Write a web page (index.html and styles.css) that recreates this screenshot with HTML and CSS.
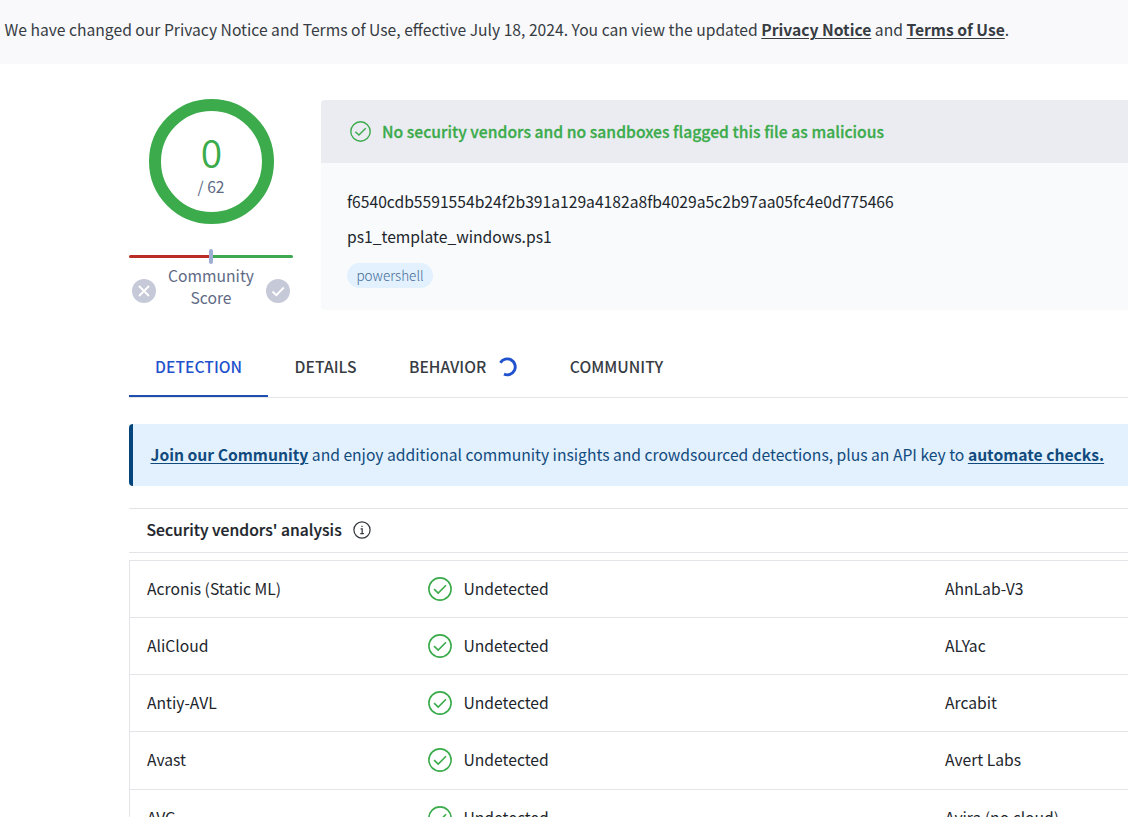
FILE: index.html
```html
<!DOCTYPE html>
<html lang="en">
<head>
<meta charset="utf-8">
<title>File report</title>
<link rel="stylesheet" href="styles.css">
</head>
<body>
<svg class="defs" width="0" height="0">
  <symbol id="check" viewBox="0 0 24 24"><circle cx="12" cy="12" r="11.1"/><path d="M6.1 12.2 10.2 16.1 18 8.3"/></symbol>
</svg>
<div class="notice"><p>We have changed our Privacy Notice and Terms of Use, effective July 18, 2024. You can view the updated <a>Privacy Notice</a> and <a>Terms of Use</a>.</p></div>
<main class="report">
  <section class="summary">
    <div class="score">
      <div class="ring"><div class="positives">0</div><div class="total">/ 62</div></div>
      <div class="gauge"><i class="bad"></i><i class="marker"></i><i class="good"></i></div>
      <div class="community">
        <svg class="vote" viewBox="0 0 24 24"><circle cx="12" cy="12" r="12"/><path d="M7 7 17 17M17 7 7 17"/></svg>
        <div class="label">Community<br>Score</div>
        <svg class="vote" viewBox="0 0 24 24"><circle cx="12" cy="12" r="12"/><path d="M6.5 12.5 10.3 16.2 17.8 8.5"/></svg>
      </div>
    </div>
    <div class="card">
      <div class="verdict"><svg class="check small"><use href="#check"/></svg><span>No security vendors and no sandboxes flagged this file as malicious</span></div>
      <div class="details">
        <div class="hash">f6540cdb5591554b24f2b391a129a4182a8fb4029a5c2b97aa05fc4e0d775466</div>
        <div class="filename">ps1_template_windows.ps1</div>
        <div class="tag">powershell</div>
      </div>
    </div>
  </section>
  <nav class="tabs">
    <div class="tab active"><span>DETECTION</span></div>
    <div class="tab"><span>DETAILS</span></div>
    <div class="tab"><span>BEHAVIOR</span><svg class="spinner" viewBox="0 0 20 20"><path d="M2.4 5.7A8 8 0 1 1 6 17.2"/></svg></div>
    <div class="tab"><span>COMMUNITY</span></div>
  </nav>
  <div class="join"><p><a>Join our Community</a> and enjoy additional community insights and crowdsourced detections, plus an API key to <a>automate checks.</a></p></div>
  <div class="heading"><span>Security vendors' analysis</span><svg class="info" viewBox="0 0 18 18"><circle cx="9" cy="9" r="8.1"/><path d="M7.6 7.8H9.2V12.6M7.3 12.6H10.9M9 4.7V6"/></svg></div>
  <div class="vendors">
    <div class="row"><span class="name">Acronis (Static ML)</span><span class="result"><svg class="check"><use href="#check"/></svg><span>Undetected</span></span><span class="name">AhnLab-V3</span></div>
    <div class="row"><span class="name">AliCloud</span><span class="result"><svg class="check"><use href="#check"/></svg><span>Undetected</span></span><span class="name">ALYac</span></div>
    <div class="row"><span class="name">Antiy-AVL</span><span class="result"><svg class="check"><use href="#check"/></svg><span>Undetected</span></span><span class="name">Arcabit</span></div>
    <div class="row"><span class="name">Avast</span><span class="result"><svg class="check"><use href="#check"/></svg><span>Undetected</span></span><span class="name">Avert Labs</span></div>
    <div class="row"><span class="name">AVG</span><span class="result"><svg class="check"><use href="#check"/></svg><span>Undetected</span></span><span class="name">Avira (no cloud)</span></div>
  </div>
</main>
</body>
</html>
```
FILE: styles.css
```css
* { box-sizing: border-box; }
body { margin: 0; height: 817px; overflow: hidden; background: #fff; color: #21252b; font: 15.66px/24px "Noto Sans CJK SC", "Noto Sans", sans-serif; white-space: nowrap; }
p { margin: 0; }
a { font-weight: 700; text-decoration: underline; text-underline-offset: 2px; }
.defs { position: absolute; }
.notice { height: 64px; padding: 18px 0 0 4.5px; background: #f9f9fb; color: #373c43; }
.report { padding: 35px 0 0 129px; }
.summary { display: flex; height: 211px; }
.score { width: 164px; margin-right: 28px; flex: none; }
.ring { width: 125px; height: 125px; margin-left: 20px; border: 12px solid #3bab4b; border-radius: 50%; text-align: center; }
.positives { margin-top: 19px; height: 45px; font-size: 39px; line-height: 42px; font-weight: 350; color: #3bab4b; }
.total { margin-left: -1px; line-height: 23px; color: #606a85; }
.gauge { display: flex; align-items: center; height: 15px; margin-top: 25px; }
.gauge i { height: 3px; flex: 1; }
.gauge .bad { background: #bb2c25; border-radius: 2px 0 0 2px; }
.gauge .good { background: #3ea951; border-radius: 0 2px 2px 0; }
.gauge .marker { flex: none; width: 4px; height: 15px; background: #9fadd2; border-radius: 2px; }
.community { display: flex; justify-content: space-between; padding: 1px 3px 0; color: #606a85; text-align: center; }
.label { line-height: 22px; }
.vote { width: 24px; height: 24px; margin-top: 13.5px; fill: #c6c9d7; }
.vote path { fill: none; stroke: #fff; stroke-width: 1.8; }
.card { flex: 1; margin-top: 1px; height: 210px; border-radius: 4px 0 0 4px; background: #f8fafc; overflow: hidden; }
.verdict { display: flex; align-items: center; height: 63px; padding-left: 29px; gap: 11px; background: #ebecf2; color: #3bab4b; font-weight: 500; letter-spacing: 0.03px; }
.verdict span { padding-top: 1px; -webkit-text-stroke: 0.3px #3bab4b; }
.check { width: 24px; height: 24px; flex: none; fill: none; stroke: #3bab4b; stroke-width: 1.6; }
.check.small { width: 21px; height: 21px; }
.details { padding: 27px 0 0 26px; }
.hash { height: 35px; }
.filename { height: 38px; }
.tag { width: 86px; height: 25px; border-radius: 13px; background: #e3f1fe; color: #416a99; font-size: 13.5px; line-height: 25px; text-align: center; font-weight: 300; }
.tabs { display: flex; height: 62px; margin-top: 26px; border-bottom: 1px solid #e2e4e8; font-weight: 500; letter-spacing: 0.03px; color: #373c43; }
.tab { display: flex; align-items: center; height: 61px; padding: 0 26px; }
.tab + .tab { padding-left: 26.5px; }
.tab.active { color: #1f52cc; border-bottom: 2px solid #1e4fae; padding-top: 2px; }
.spinner { width: 20px; height: 20px; margin: 0 -1px 0 12px; fill: none; stroke: #1f52cc; stroke-width: 2.9; }
.join { height: 62px; margin-top: 26px; padding: 19px 0 0 17.5px; border-left: 4px solid #04467c; border-radius: 4px 0 0 4px; background: #e2f1fd; color: #114a7d; }
.heading { display: flex; align-items: center; height: 45px; margin-top: 22px; padding: 0 0 1px 17.5px; gap: 11px; border: solid #e3e4e8; border-width: 1px 0; font-weight: 500; letter-spacing: 0.03px; }
.heading span { -webkit-text-stroke: 0.2px #21252b; }
.info { width: 18px; height: 18px; fill: none; stroke: #30353c; stroke-width: 1.2; }
.vendors { margin-top: 7px; border: solid #e3e4e8; border-width: 1px 0 0 1px; }
.row { display: grid; grid-template-columns: 281px 517px 1fr; align-items: center; height: 57px; padding-left: 17px; border-bottom: 1px solid #e3e4e8; }
.row:nth-child(4) { height: 58px; padding-bottom: 1px; }
.result { display: flex; align-items: center; gap: 11.5px; }
.name, .result span { padding-bottom: 1px; }
```
